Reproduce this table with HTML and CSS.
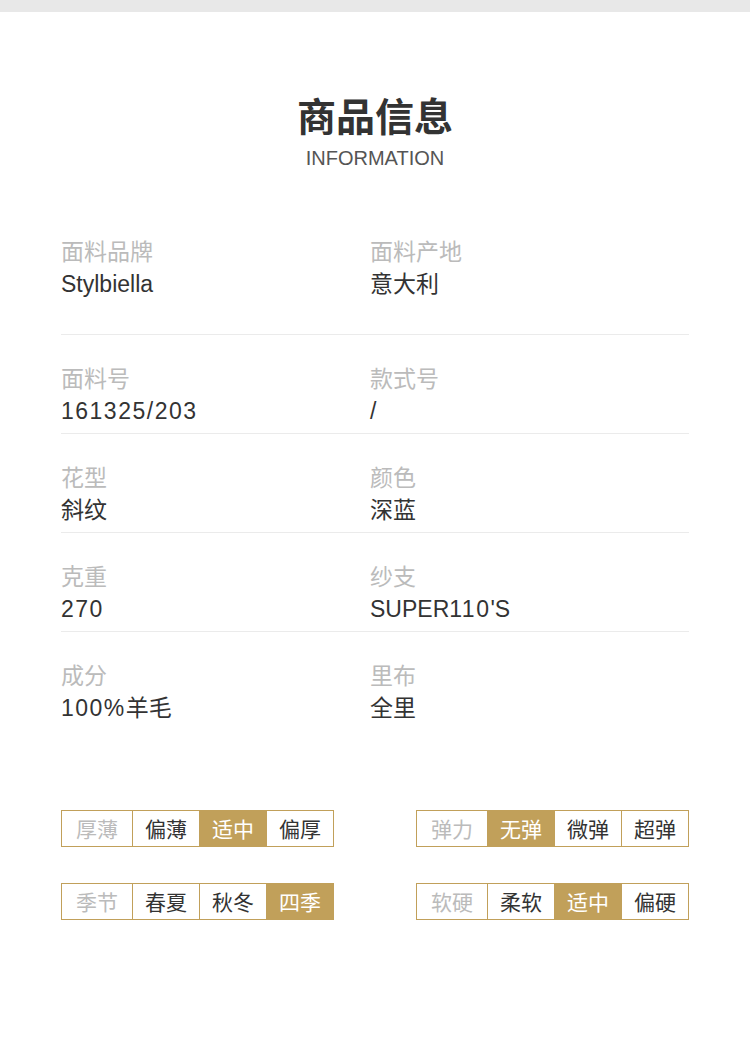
FILE: index.html
```html
<!DOCTYPE html>
<html lang="zh-CN">
<head>
<meta charset="utf-8">
<link rel="stylesheet" href="styles.css">
</head>
<body>
<div class="topbar"></div>
<header class="header">
  <h1 class="title">商品信息</h1>
  <div class="subtitle">INFORMATION</div>
</header>
<section class="info">
  <div class="row row-first">
    <div class="cell"><div class="label">面料品牌</div><div class="value">Stylbiella</div></div>
    <div class="cell"><div class="label">面料产地</div><div class="value">意大利</div></div>
  </div>
  <div class="row">
    <div class="cell"><div class="label">面料号</div><div class="value"><span class="num">161325/203</span></div></div>
    <div class="cell"><div class="label">款式号</div><div class="value">/</div></div>
  </div>
  <div class="row">
    <div class="cell"><div class="label">花型</div><div class="value">斜纹</div></div>
    <div class="cell"><div class="label">颜色</div><div class="value">深蓝</div></div>
  </div>
  <div class="row">
    <div class="cell"><div class="label">克重</div><div class="value"><span class="num">270</span></div></div>
    <div class="cell"><div class="label">纱支</div><div class="value">SUPER<span class="num">110</span>'S</div></div>
  </div>
  <div class="row row-last">
    <div class="cell"><div class="label">成分</div><div class="value"><span class="num">100%</span>羊毛</div></div>
    <div class="cell"><div class="label">里布</div><div class="value">全里</div></div>
  </div>
</section>
<section class="tags">
  <div class="tag-row">
    <div class="tag-group">
      <span class="tag tag-head">厚薄</span><span class="tag">偏薄</span><span class="tag active">适中</span><span class="tag">偏厚</span>
    </div>
    <div class="tag-group">
      <span class="tag tag-head">弹力</span><span class="tag active">无弹</span><span class="tag">微弹</span><span class="tag">超弹</span>
    </div>
  </div>
  <div class="tag-row">
    <div class="tag-group">
      <span class="tag tag-head">季节</span><span class="tag">春夏</span><span class="tag">秋冬</span><span class="tag active">四季</span>
    </div>
    <div class="tag-group">
      <span class="tag tag-head">软硬</span><span class="tag">柔软</span><span class="tag active">适中</span><span class="tag">偏硬</span>
    </div>
  </div>
</section>
</body>
</html>
```
FILE: styles.css
```css
* { box-sizing: border-box; }
html, body {
  margin: 0;
  padding: 0;
  background: #fff;
}
body {
  width: 750px;
  font-family: "Liberation Sans", "Noto Sans CJK SC", sans-serif;
  color: #333;
}
.topbar {
  height: 12px;
  background: #e8e8e8;
}
.header {
  padding-top: 82px;
  text-align: center;
}
.title {
  margin: 0;
  font-family: "Noto Sans CJK SC", sans-serif;
  font-size: 39px;
  font-weight: 700;
  line-height: 40px;
  color: #333;
}
.subtitle {
  margin-top: 12px;
  font-size: 20px;
  line-height: 24px;
  color: #555;
}
.info {
  padding: 0 61px;
  margin-top: 66px;
}
.row {
  display: grid;
  grid-template-columns: 309px 1fr;
  padding: 28px 0 6px;
  border-bottom: 1px solid #ebebeb;
}
.row-first {
  padding-top: 0;
  padding-bottom: 34px;
}
.row-last {
  border-bottom: none;
}
.label {
  font-size: 23px;
  line-height: 32px;
  color: #bbb;
}
.value {
  font-size: 23px;
  line-height: 32px;
  color: #333;
}
.num {
  letter-spacing: 1.5px;
}
.tags {
  padding: 0 61px;
  margin-top: 80px;
  display: flex;
  flex-direction: column;
  gap: 36px;
}
.tag-row {
  display: flex;
  justify-content: space-between;
}
.tag-group {
  display: flex;
  border: 1px solid #c1a05a;
  height: 37px;
}
.tag {
  width: 67px;
  border-left: 1px solid #c1a05a;
  font-family: "Noto Sans CJK SC", sans-serif;
  font-size: 21px;
  line-height: 35px;
  text-align: center;
  color: #333;
}
.tag-head {
  width: 70px;
  border-left: none;
  color: #bbb;
}
.tag.active {
  background: #c1a05a;
  color: #fff;
}
```
